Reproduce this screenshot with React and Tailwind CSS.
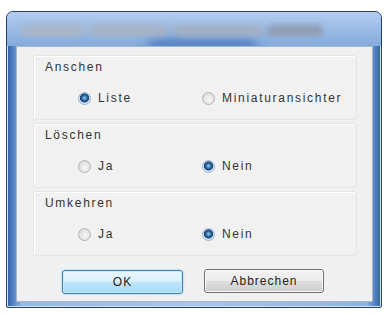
import React from 'react';

function Radio({ checked, label }) {
  return (
    <div className="flex items-center h-[14px]">
      {checked ? (
        <span className="w-[13px] h-[13px] rounded-full border border-[#9db4cc] bg-[radial-gradient(circle_at_50%_45%,#9fd0f0_0%,#225e98_35%,#1a4775_52%,#cfe2f3_60%,#eef4fa_100%)] shrink-0" />
      ) : (
        <span className="w-[13px] h-[13px] rounded-full border border-[#b4b4b4] bg-[radial-gradient(circle_at_55%_60%,#f7f7f7_0%,#e2e2e2_55%,#d2d2d2_100%)] shrink-0" />
      )}
      <span className="ml-[7px] text-[12px] leading-[14px] tracking-[1.7px] text-[#333]">{label}</span>
    </div>
  );
}

function Group({ title, left, right }) {
  return (
    <div className="h-[65px] w-[324px] rounded-[3px] border border-[#e2e6ea] bg-[#f1f1f1] shadow-[inset_1px_1px_0_#ffffff]">
      <div className="pl-[11px] pt-[5px] h-[17px] text-[12px] leading-[12px] tracking-[1.7px] text-[#333]">{title}</div>
      <div className="mt-[18px] flex">
        <div className="w-[168px] pl-[44px]">
          <Radio checked={left.checked} label={left.label} />
        </div>
        <div>
          <Radio checked={right.checked} label={right.label} />
        </div>
      </div>
    </div>
  );
}

export default function App() {
  const groups = [
    { title: 'Anschen', left: { label: 'Liste', checked: true }, right: { label: 'Miniaturansichter', checked: false } },
    { title: 'Löschen', left: { label: 'Ja', checked: false }, right: { label: 'Nein', checked: true } },
    { title: 'Umkehren', left: { label: 'Ja', checked: false }, right: { label: 'Nein', checked: true } },
  ];

  return (
    <div className="w-[387px] h-[315px] bg-white pt-[11px] pl-[6px] font-['Liberation_Sans',Arial,sans-serif]">
      <div className="w-[376px] h-[297px] rounded-t-[7px] rounded-b-[2px] border border-[#24406a] bg-[linear-gradient(90deg,#2f5fa5_0%,#5d8acb_2%,#94b8e4_4%,#a8c5ea_50%,#8fb3e0_96%,#5d8acb_98%,#2f5fa5_100%)] shadow-[inset_0_0_0_1px_#d3e2f5] flex flex-col">
        <div className="h-[34px] shrink-0 relative overflow-hidden rounded-t-[6px] bg-[linear-gradient(180deg,#b3cdee_0%,#9dbde7_45%,#85abdc_100%)]">
          <div className="absolute left-[140px] top-[26px] w-[110px] h-[14px] rounded-full bg-[#2d62b0] blur-[6px] opacity-60" />
          <div className="absolute left-[14px] top-[13px] w-[310px] h-[11px] flex gap-[4px] blur-[3px]">
            <span className="w-[64px] bg-[#aab5c4] rounded-full" />
            <span className="w-[80px] bg-[#a7b2c2] rounded-full" />
            <span className="w-[90px] bg-[#a3afc0] rounded-full" />
            <span className="w-[56px] bg-[#8f9cb0] rounded-full" />
          </div>
        </div>
        <div className="ml-[9px] mr-[8px] h-[256px] border border-[#a5b6cd] bg-[#f0f0f0] flex flex-col pl-[16px] pt-[8px]">
          <div className="flex flex-col gap-[3px]">
            {groups.map((g) => (
              <Group key={g.title} title={g.title} left={g.left} right={g.right} />
            ))}
          </div>
          <div className="mt-[14px] flex">
            <button className="ml-[29px] w-[121px] h-[24px] rounded-[3px] border border-[#3c7fb1] bg-[linear-gradient(180deg,#eaf6fd_0%,#d9f0fc_50%,#bee6fd_51%,#a7d9f5_100%)] shadow-[inset_0_0_0_1px_#c8ecfb,0_0_2px_#7fc6ec] text-[12px] tracking-[1px] text-[#222]">
              OK
            </button>
            <button className="ml-[21px] -mt-[1px] w-[120px] h-[24px] rounded-[3px] border border-[#707070] bg-[linear-gradient(180deg,#f2f2f2_0%,#ebebeb_50%,#dddddd_51%,#cfcfcf_100%)] shadow-[inset_0_0_0_1px_#fbfbfb] text-[12px] tracking-[1px] text-[#222]">
              Abbrechen
            </button>
          </div>
        </div>
      </div>
    </div>
  );
}
